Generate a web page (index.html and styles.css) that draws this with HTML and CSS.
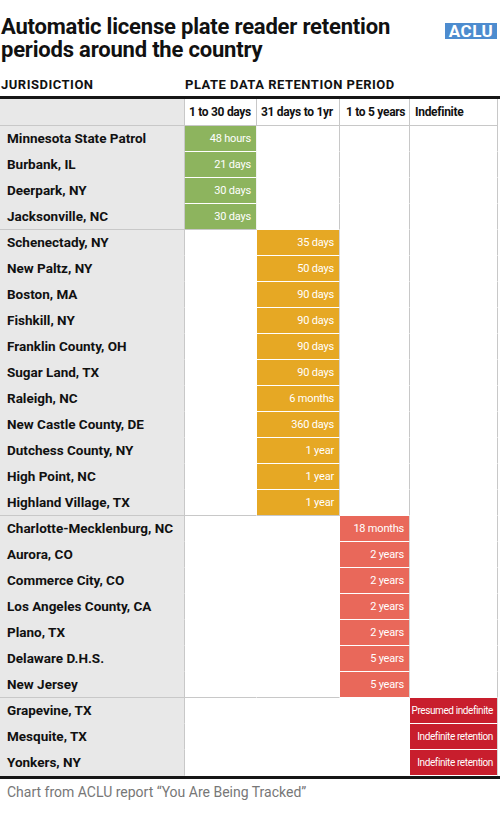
FILE: index.html
```html
<!DOCTYPE html>
<html lang="en">
<head>
<meta charset="utf-8">
<title>Automatic license plate reader retention periods</title>
<link rel="stylesheet" href="styles.css">
</head>
<body>
<div class="page">
  <header class="top">
    <h1 class="title">Automatic license plate reader retention<br>periods around the country</h1>
    <div class="logo">ACLU</div>
  </header>
  <div class="heads"><span class="h-jur">JURISDICTION</span><span class="h-period">PLATE DATA RETENTION PERIOD</span></div>
  <div class="table">
    <div class="grid">
      <div class="c name th"></div>
      <div class="c th">1 to 30 days</div>
      <div class="c th">31 days to 1yr</div>
      <div class="c th th3">1 to 5 years</div>
      <div class="c th th4">Indefinite</div>

      <div class="c name">Minnesota State Patrol</div><div class="c bar g">48 hours</div><div class="c after"></div><div class="c after"></div><div class="c after"></div>
      <div class="c name">Burbank, IL</div><div class="c bar g">21 days</div><div class="c after"></div><div class="c after"></div><div class="c after"></div>
      <div class="c name">Deerpark, NY</div><div class="c bar g">30 days</div><div class="c after"></div><div class="c after"></div><div class="c after"></div>
      <div class="c name end">Jacksonville, NC</div><div class="c bar g end">30 days</div><div class="c after"></div><div class="c after"></div><div class="c after"></div>

      <div class="c name">Schenectady, NY</div><div class="c"></div><div class="c bar o">35 days</div><div class="c after"></div><div class="c after"></div>
      <div class="c name">New Paltz, NY</div><div class="c"></div><div class="c bar o">50 days</div><div class="c after"></div><div class="c after"></div>
      <div class="c name">Boston, MA</div><div class="c"></div><div class="c bar o">90 days</div><div class="c after"></div><div class="c after"></div>
      <div class="c name">Fishkill, NY</div><div class="c"></div><div class="c bar o">90 days</div><div class="c after"></div><div class="c after"></div>
      <div class="c name">Franklin County, OH</div><div class="c"></div><div class="c bar o">90 days</div><div class="c after"></div><div class="c after"></div>
      <div class="c name">Sugar Land, TX</div><div class="c"></div><div class="c bar o">90 days</div><div class="c after"></div><div class="c after"></div>
      <div class="c name">Raleigh, NC</div><div class="c"></div><div class="c bar o">6 months</div><div class="c after"></div><div class="c after"></div>
      <div class="c name">New Castle County, DE</div><div class="c"></div><div class="c bar o">360 days</div><div class="c after"></div><div class="c after"></div>
      <div class="c name">Dutchess County, NY</div><div class="c"></div><div class="c bar o">1 year</div><div class="c after"></div><div class="c after"></div>
      <div class="c name">High Point, NC</div><div class="c"></div><div class="c bar o">1 year</div><div class="c after"></div><div class="c after"></div>
      <div class="c name end">Highland Village, TX</div><div class="c end"></div><div class="c bar o end">1 year</div><div class="c after"></div><div class="c after"></div>

      <div class="c name">Charlotte-Mecklenburg, NC</div><div class="c"></div><div class="c"></div><div class="c bar r">18 months</div><div class="c after"></div>
      <div class="c name">Aurora, CO</div><div class="c"></div><div class="c"></div><div class="c bar r">2 years</div><div class="c after"></div>
      <div class="c name">Commerce City, CO</div><div class="c"></div><div class="c"></div><div class="c bar r">2 years</div><div class="c after"></div>
      <div class="c name">Los Angeles County, CA</div><div class="c"></div><div class="c"></div><div class="c bar r">2 years</div><div class="c after"></div>
      <div class="c name">Plano, TX</div><div class="c"></div><div class="c"></div><div class="c bar r">2 years</div><div class="c after"></div>
      <div class="c name">Delaware D.H.S.</div><div class="c"></div><div class="c"></div><div class="c bar r">5 years</div><div class="c after"></div>
      <div class="c name end">New Jersey</div><div class="c end"></div><div class="c end"></div><div class="c bar r">5 years</div><div class="c after"></div>

      <div class="c name">Grapevine, TX</div><div class="c"></div><div class="c"></div><div class="c"></div><div class="c bar d">Presumed indefinite</div>
      <div class="c name">Mesquite, TX</div><div class="c"></div><div class="c"></div><div class="c"></div><div class="c bar d">Indefinite retention</div>
      <div class="c name">Yonkers, NY</div><div class="c"></div><div class="c"></div><div class="c"></div><div class="c bar d">Indefinite retention</div>
    </div>
  </div>
  <p class="caption">Chart from ACLU report “You Are Being Tracked”</p>
</div>
</body>
</html>
```

FILE: styles.css
```css
body {
  margin: 0;
  background: #fff;
  font-family: Roboto, "Liberation Sans", sans-serif;
  color: #111;
}

.page {
  width: 500px;
}

.top {
  display: flex;
  justify-content: space-between;
  align-items: flex-start;
  padding-top: 15px;
}

.title {
  margin: 0;
  padding-left: 1px;
  font-size: 22px;
  line-height: 23px;
  font-weight: 700;
  letter-spacing: -0.2px;
  color: #111;
}

.logo {
  margin-top: 8px;
  margin-right: 3px;
  width: 52px;
  height: 16px;
  background: #4d8ccf;
  color: #fff;
  font-weight: 700;
  font-size: 17px;
  line-height: 16px;
  text-align: center;
  letter-spacing: 0.5px;
}

.heads {
  display: grid;
  grid-template-columns: 185px auto;
  margin-top: 16px;
  height: 19px;
  font-size: 13px;
  line-height: 16px;
  font-weight: 700;
  letter-spacing: 0.5px;
}

.h-jur {
  padding-left: 1px;
}

.table {
  border-top: 3px solid #161616;
  border-bottom: 3px solid #161616;
}

.grid {
  display: grid;
  grid-template-columns: 185px 72px 83px 70px 88px;
  grid-template-rows: 27px;
  grid-auto-rows: 26px;
}

.c {
  box-sizing: border-box;
  border-right: 1px solid transparent;
  border-bottom: 1px solid transparent;
  white-space: nowrap;
  overflow: hidden;
}

.th {
  border-right-color: #c8c8c8;
  border-bottom-color: #c8c8c8;
  font-size: 12px;
  font-weight: 700;
  letter-spacing: -0.3px;
  line-height: 26px;
  padding-left: 4px;
}

.th3 {
  padding-left: 6px;
}

.th4 {
  padding-left: 5px;
}

.name {
  background: #e8e8e8;
  border-right-color: #c8c8c8;
  padding-left: 7px;
  font-size: 13.5px;
  font-weight: 700;
  line-height: 25px;
}

.name.th {
  padding-left: 0;
}

.after {
  border-right-color: #c8c8c8;
}

.end {
  border-bottom-color: #c8c8c8;
}

.bar {
  color: #fff;
  text-align: right;
  padding: 1px 5px 0 0;
  font-size: 11px;
  line-height: 24px;
  letter-spacing: -0.2px;
  border-bottom-color: #fff;
  border-right-color: #d6d6d6;
}

.bar.end {
  border-bottom-color: #c8c8c8;
}

.g {
  background: #8db45e;
  border-right-color: #f2f2f2;
}

.o {
  background: #e6a824;
}

.r {
  background: #e9685a;
}

.d {
  background: #c81e2d;
  font-size: 10px;
  letter-spacing: -0.4px;
  padding-right: 4px;
}

.caption {
  margin: 4px 0 0;
  padding-left: 7px;
  font-size: 14px;
  line-height: 18px;
  color: #777;
}
```
